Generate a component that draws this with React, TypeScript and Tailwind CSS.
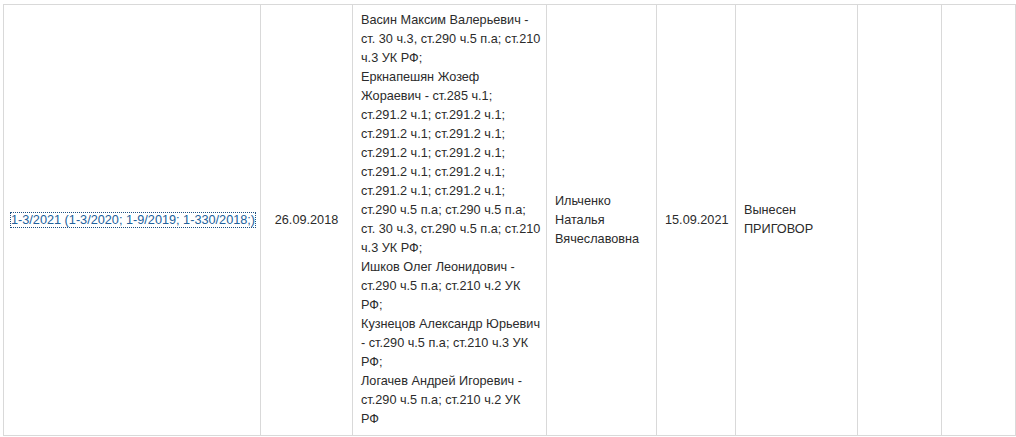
import React from 'react';

const accused: string[] = [
  'Васин Максим Валерьевич -',
  'ст. 30 ч.3, ст.290 ч.5 п.а; ст.210',
  'ч.3 УК РФ;',
  'Еркнапешян Жозеф',
  'Жораевич - ст.285 ч.1;',
  'ст.291.2 ч.1; ст.291.2 ч.1;',
  'ст.291.2 ч.1; ст.291.2 ч.1;',
  'ст.291.2 ч.1; ст.291.2 ч.1;',
  'ст.291.2 ч.1; ст.291.2 ч.1;',
  'ст.291.2 ч.1; ст.291.2 ч.1;',
  'ст.290 ч.5 п.а; ст.290 ч.5 п.а;',
  'ст. 30 ч.3, ст.290 ч.5 п.а; ст.210',
  'ч.3 УК РФ;',
  'Ишков Олег Леонидович -',
  'ст.290 ч.5 п.а; ст.210 ч.2 УК',
  'РФ;',
  'Кузнецов Александр Юрьевич',
  '- ст.290 ч.5 п.а; ст.210 ч.3 УК',
  'РФ;',
  'Логачев Андрей Игоревич -',
  'ст.290 ч.5 п.а; ст.210 ч.2 УК',
  'РФ',
];

const cell = 'border border-[#d9d9d9] align-middle px-2 py-[6px]';

export default function App() {
  return (
    <div className="w-[1016px] h-[437px] bg-white overflow-hidden pt-1 pl-[3px] font-['Liberation_Sans',Arial,sans-serif] text-[12.7px] leading-[19px] text-[#2b2b2b]">
      <table className="table-fixed border-collapse w-[1013px]">
        <colgroup>
          <col className="w-[257px]" />
          <col className="w-[92px]" />
          <col className="w-[194px]" />
          <col className="w-[110px]" />
          <col className="w-[79px]" />
          <col className="w-[122px]" />
          <col className="w-[84px]" />
          <col className="w-[74px]" />
        </colgroup>
        <tbody>
          <tr>
            <td className="border border-[#d9d9d9] align-middle pl-[7px] pr-1 py-[6px]">
              <a href="#" className="text-[#22619c] whitespace-nowrap outline outline-1 outline-dotted outline-[#1d4f80]">
                1-3/2021 (1-3/2020; 1-9/2019; 1-330/2018;)
              </a>
            </td>
            <td className={`${cell} text-center`}>26.09.2018</td>
            <td className={cell}>
              {accused.map((line, i) => (
                <div key={i} className="whitespace-nowrap">{line}</div>
              ))}
            </td>
            <td className={cell}>
              <div>Ильченко</div>
              <div>Наталья</div>
              <div>Вячеславовна</div>
            </td>
            <td className={`${cell} text-center`}>15.09.2021</td>
            <td className={cell}>
              <div>Вынесен</div>
              <div>ПРИГОВОР</div>
            </td>
            <td className={cell}></td>
            <td className={cell}></td>
          </tr>
        </tbody>
      </table>
    </div>
  );
}
